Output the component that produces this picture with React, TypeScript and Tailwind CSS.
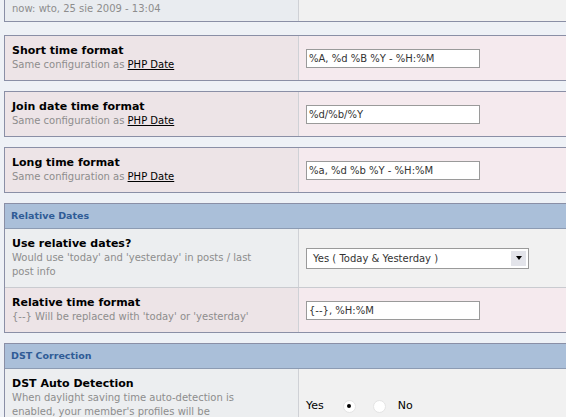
const font = { fontFamily: '"DejaVu Sans", Verdana, sans-serif' };

function Row({ label, desc, pink, children, last }: { label: string; desc: React.ReactNode; pink?: boolean; children: React.ReactNode; last?: boolean }) {
  return (
    <div className={`flex ${last ? '' : 'border-b border-[#c9cbd0]'}`}>
      <div className={`w-[294px] shrink-0 border-r border-[#cfd1d6] px-[7px] py-[8px] ${pink ? 'bg-[#ede4e7]' : 'bg-[#eceef0]'}`}>
        <div className="text-[11px] font-bold text-black leading-[14px]">{label}</div>
        <div className="text-[10px] text-[#8d8d8d] leading-[14px]">{desc}</div>
      </div>
      <div className={`flex-1 flex items-center px-[7px] ${pink ? 'bg-[#f5eaee]' : 'bg-[#f1f1f1]'}`}>{children}</div>
    </div>
  );
}

function TextInput({ value }: { value: string }) {
  return (
    <div className="w-[174px] h-[19px] border border-[#9a9a9a] bg-white px-[2px] text-[10px] leading-[17px] text-[#333]">
      {value}
    </div>
  );
}

const phpDate = (
  <>
    Same configuration as <span className="text-black underline">PHP Date</span>
  </>
);

function Header({ title }: { title: string }) {
  return (
    <div className="h-[25px] bg-[#aabfd9] border-b border-[#8c9bb3] px-[6px] flex items-center text-[9.5px] font-bold text-[#2f5b96]">
      {title}
    </div>
  );
}

export default function App() {
  return (
    <div className="w-[566px] h-[417px] overflow-hidden bg-[#eef1f6]" style={font}>
      <div className="pl-[4px] w-[620px]">
        <div className="-mt-[20px] flex border border-[#8a8fa6] mb-[13px]">
          <div className="w-[294px] shrink-0 border-r border-[#cfd1d6] bg-[#e9ecf0] px-[7px] pt-[21px] pb-[5px] text-[10px] text-[#8d8d8d] leading-[14px]">
            now: wto, 25 sie 2009 - 13:04
          </div>
          <div className="flex-1 bg-[#f1f1f1]" />
        </div>

        <div className="border border-[#8a8fa6] mb-[10px]">
          <Row label="Short time format" desc={phpDate} pink last>
            <TextInput value="%A, %d %B %Y - %H:%M" />
          </Row>
        </div>
        <div className="border border-[#8a8fa6] mb-[10px]">
          <Row label="Join date time format" desc={phpDate} pink last>
            <TextInput value="%d/%b/%Y" />
          </Row>
        </div>
        <div className="border border-[#8a8fa6] mb-[10px]">
          <Row label="Long time format" desc={phpDate} pink last>
            <TextInput value="%a, %d %b %Y - %H:%M" />
          </Row>
        </div>

        <div className="border border-[#8a8fa6] mb-[10px]">
          <Header title="Relative Dates" />
          <Row label="Use relative dates?" desc={<>Would use 'today' and 'yesterday' in posts / last<br />post info</>}>
            <div className="w-[223px] h-[21px] border border-[#9a9a9a] bg-white flex items-center justify-between pl-[6px] pr-[2px] text-[10px] text-[#333]">
              <span>Yes ( Today &amp; Yesterday )</span>
              <span className="w-[15px] h-[15px] bg-[#e3e4ea] flex items-center justify-center">
                <span className="w-0 h-0 border-x-[3px] border-x-transparent border-t-[4px] border-t-black" />
              </span>
            </div>
          </Row>
          <Row label="Relative time format" desc="{--} Will be replaced with 'today' or 'yesterday'" pink last>
            <TextInput value="{--}, %H:%M" />
          </Row>
        </div>

        <div className="border border-[#8a8fa6]">
          <Header title="DST Correction" />
          <Row label="DST Auto Detection" desc={<>When daylight saving time auto-detection is<br />enabled, your member's profiles will be<br />updated</>} last>
            <div className="flex items-center pt-[2px] text-[11px] text-black">
              <span>Yes</span>
              <span className="ml-[19px] w-[13px] h-[13px] rounded-full bg-white border border-[#e4e4e4] flex items-center justify-center">
                <span className="w-[4px] h-[4px] rounded-full bg-black" />
              </span>
              <span className="ml-[17px] w-[13px] h-[13px] rounded-full bg-white border border-[#e4e4e4]" />
              <span className="ml-[12px]">No</span>
            </div>
          </Row>
        </div>
      </div>
    </div>
  );
}
